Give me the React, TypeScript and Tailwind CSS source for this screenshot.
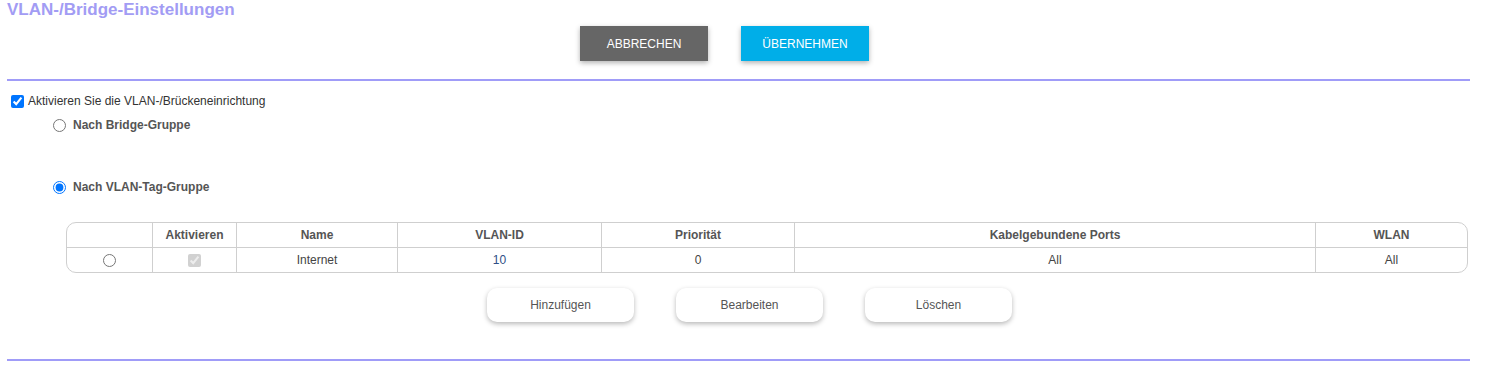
const columns = ['', 'Aktivieren', 'Name', 'VLAN-ID', 'Priorität', 'Kabelgebundene Ports', 'WLAN'];

function ActionButton({ label }: { label: string }) {
  return (
    <button className="w-[147px] h-[34px] rounded-[10px] bg-white text-[12px] text-[#555] shadow-[0_2px_5px_rgba(0,0,0,0.28)]">
      {label}
    </button>
  );
}

export default function App() {
  return (
    <div className="w-[1488px] h-[372px] bg-white text-[12px] text-[#333] overflow-hidden" style={{ fontFamily: '"Liberation Sans", Arial, sans-serif' }}>
      <div className="pl-[7px] pr-[18px]">
        <h1 className="text-[17px] leading-[20px] font-bold text-[#a29cf4]">VLAN-/Bridge-Einstellungen</h1>

        <div className="flex gap-[33px] pl-[573px] mt-[6px]">
          <button className="w-[128px] h-[35px] bg-[#666666] text-white text-[12px] shadow-[0_2px_5px_rgba(0,0,0,0.3)]">
            ABBRECHEN
          </button>
          <button className="w-[128px] h-[35px] bg-[#00aee8] text-white text-[12px] shadow-[0_2px_5px_rgba(0,0,0,0.3)]">
            ÜBERNEHMEN
          </button>
        </div>

        <div className="mt-[18px] h-[2px] bg-[#a09cf8]" />

        <label className="flex items-center mt-[13px] pl-[4px] h-[14px]">
          <input type="checkbox" defaultChecked className="m-0 w-[13px] h-[13px]" />
          <span className="ml-[4px]">Aktivieren Sie die VLAN-/Brückeneinrichtung</span>
        </label>

        <div className="flex flex-col pl-[46px] mt-[10px] gap-[48px]">
          <label className="flex items-center h-[14px] text-[#555] font-bold">
            <input type="radio" name="mode" className="m-0 w-[13px] h-[13px]" />
            <span className="ml-[7px]">Nach Bridge-Gruppe</span>
          </label>
          <label className="flex items-center h-[14px] text-[#555] font-bold">
            <input type="radio" name="mode" defaultChecked className="m-0 w-[13px] h-[13px]" />
            <span className="ml-[7px]">Nach VLAN-Tag-Gruppe</span>
          </label>
        </div>

        <div className="ml-[59px] mt-[28px] w-[1402px] border border-[#cfcfcf] rounded-[10px] overflow-hidden">
          <div className="grid grid-cols-[85px_84px_161px_204px_193px_521px_1fr] h-[25px] border-b border-[#cfcfcf] font-bold text-[#555]">
            {columns.map((c, i) => (
              <div key={i} className={`flex items-center justify-center ${i > 0 ? 'border-l border-[#cfcfcf]' : ''}`}>
                {c}
              </div>
            ))}
          </div>
          <div className="grid grid-cols-[85px_84px_161px_204px_193px_521px_1fr] h-[24px] text-[#444]">
            <div className="flex items-center justify-center">
              <input type="radio" name="row" className="m-0 w-[13px] h-[13px]" />
            </div>
            <div className="flex items-center justify-center border-l border-[#cfcfcf]">
              <input type="checkbox" defaultChecked disabled className="m-0 w-[13px] h-[13px]" />
            </div>
            <div className="flex items-center justify-center border-l border-[#cfcfcf]">Internet</div>
            <div className="flex items-center justify-center border-l border-[#cfcfcf] text-[#2f4f86]">10</div>
            <div className="flex items-center justify-center border-l border-[#cfcfcf]">0</div>
            <div className="flex items-center justify-center border-l border-[#cfcfcf]">All</div>
            <div className="flex items-center justify-center border-l border-[#cfcfcf]">All</div>
          </div>
        </div>

        <div className="flex gap-[42px] pl-[480px] mt-[15px]">
          <ActionButton label="Hinzufügen" />
          <ActionButton label="Bearbeiten" />
          <ActionButton label="Löschen" />
        </div>

        <div className="mt-[37px] h-[2px] bg-[#a09cf8]" />
      </div>
    </div>
  );
}
